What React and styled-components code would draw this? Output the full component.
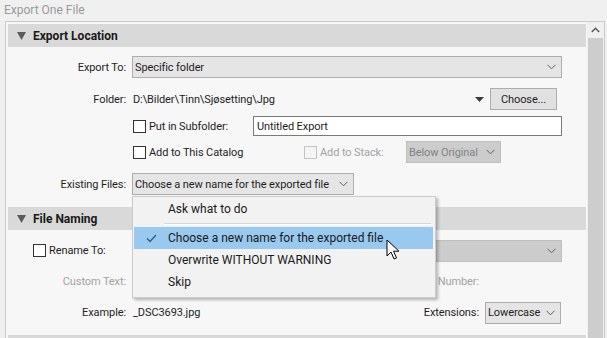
import React from 'react'
import styled, { createGlobalStyle } from 'styled-components'

const GlobalStyle = createGlobalStyle`
  html, body {
    margin: 0;
    padding: 0;
    background: #f0f0f0;
  }
  body {
    font-family: Roboto, 'Noto Sans', sans-serif;
    font-size: 11px;
    letter-spacing: -0.1px;
    color: #1e1e1e;
  }
`

const Page = styled.div`
  width: 607px;
  height: 338px;
  overflow: hidden;
  background: #f0f0f0;
  display: flex;
  flex-direction: column;
`
const Title = styled.div`
  height: 21px;
  line-height: 20px;
  padding-left: 4px;
  color: #9a9a9a;
  font-size: 12px;
  letter-spacing: 0;
  box-sizing: border-box;
`
const Panel = styled.div`
  flex: 1;
  margin-left: 5px;
  width: 600px;
  box-sizing: border-box;
  border: 1px solid #cacaca;
  border-bottom: none;
  background: #f7f7f7;
  display: flex;
  overflow: hidden;
`
const Content = styled.div`
  width: 578px;
  padding: 2px 0 0 2px;
`
const Scrollbar = styled.div`
  width: 17px;
  margin-left: 1px;
  background: #f0f0f0;
  display: flex;
  flex-direction: column;
  align-items: center;
`
const ScrollArrow = styled.div`
  height: 16px;
  display: flex;
  align-items: center;
  justify-content: center;
`
const Thumb = styled.div`
  flex: 1;
  width: 15px;
  background: #cdcdcd;
`
const SectionHeader = styled.div`
  height: 23px;
  margin-top: ${({ $gap }) => $gap || 0}px;
  background: #d9d9d9;
  display: flex;
  align-items: center;
  gap: 7px;
  padding-left: 9px;
  font-weight: 700;
  font-size: 12px;
  letter-spacing: 0;
  color: #1a1a1a;
`
const Body = styled.div`
  padding: ${({ $pad }) => $pad};
`
const Row = styled.div`
  height: ${({ $h }) => $h}px;
  display: flex;
  align-items: center;
`
const Label = styled.div`
  width: ${({ $w }) => $w || 118}px;
  flex-shrink: 0;
  text-align: right;
  margin-right: ${({ $gap }) => ($gap === undefined ? 6 : $gap)}px;
  color: ${({ $disabled }) => ($disabled ? '#a3a3a3' : '#1e1e1e')};
`
const Value = styled.span`
  margin-left: 1px;
`
const SelectBox = styled.div`
  width: ${({ $w }) => $w}px;
  height: 22px;
  box-sizing: border-box;
  border: 1px solid ${({ $disabled }) => ($disabled ? '#bfbfbf' : '#adadad')};
  background: ${({ $disabled }) => ($disabled ? '#cccccc' : '#e5e5e5')};
  color: ${({ $disabled }) => ($disabled ? '#838383' : '#1e1e1e')};
  display: flex;
  align-items: center;
  padding: 0 0 0 2px;
  white-space: nowrap;
  flex-shrink: 0;
`
const SelectText = styled.span`
  flex: 1;
  overflow: hidden;
`
const Chevron = styled.svg`
  width: 9px;
  height: 6px;
  margin: 0 5px 0 3px;
  flex-shrink: 0;
`
const Button = styled.div`
  width: 67px;
  height: 22px;
  box-sizing: border-box;
  border: 1px solid #adadad;
  background: #e1e1e1;
  display: flex;
  align-items: center;
  justify-content: center;
  margin-left: 6px;
`
const Spacer = styled.div`
  flex: 1;
`
const RightPad = styled.div`
  width: ${({ $w }) => $w}px;
  flex-shrink: 0;
`
const CheckItem = styled.label`
  display: flex;
  align-items: center;
  gap: 3px;
  margin-left: ${({ $left }) => $left || 0}px;
  width: ${({ $w }) => ($w ? `${$w}px` : 'auto')};
  flex-shrink: 0;
  color: ${({ $disabled }) => ($disabled ? '#a3a3a3' : '#1e1e1e')};
`
const Box = styled.span`
  width: 13px;
  height: 13px;
  box-sizing: border-box;
  border: 1px solid ${({ $disabled }) => ($disabled ? '#c4c4c4' : '#333333')};
  background: ${({ $disabled }) => ($disabled ? '#f5f5f5' : '#ffffff')};
  display: inline-block;
`
const TextInput = styled.div`
  width: 309px;
  height: 20px;
  box-sizing: border-box;
  border: 1px solid #7a7a7a;
  background: #ffffff;
  display: flex;
  align-items: center;
  padding-left: 3px;
`
const Anchor = styled.div`
  position: relative;
`
const Menu = styled.div`
  position: absolute;
  left: 0;
  top: 23px;
  width: 304px;
  box-sizing: border-box;
  border: 1px solid #cccccc;
  background: #f2f2f2;
  padding: 1px 2px 4px 1px;
  box-shadow: 2px 2px 3px rgba(0, 0, 0, 0.28);
  z-index: 5;
  font-size: 12px;
  letter-spacing: 0;
`
const MenuItem = styled.div`
  height: 22px;
  display: flex;
  align-items: center;
  background: ${({ $active }) => ($active ? '#99c9ef' : 'transparent')};
  color: #1a1a1a;
`
const CheckSlot = styled.div`
  width: 34px;
  display: flex;
  justify-content: center;
`
const Separator = styled.div`
  height: 1px;
  margin: 3px 2px 2px 30px;
  background: #d7d7d7;
  border-bottom: 1px solid #ffffff;
`
const Cursor = styled.svg`
  position: absolute;
  left: 254px;
  top: 66px;
  width: 14px;
  height: 22px;
  z-index: 6;
`
const DropTri = styled.svg`
  width: 9px;
  height: 5px;
`

const Tri = () => (
  <svg width="9" height="8" viewBox="0 0 9 8">
    <path d="M0 0 H9 L4.5 8 Z" fill="#5b5b5b" />
  </svg>
)

const Chev = () => (
  <Chevron viewBox="0 0 9 6">
    <path d="M0.5 0.8 L4.5 4.8 L8.5 0.8" fill="none" stroke="#5f5f5f" strokeWidth="1" />
  </Chevron>
)

const Select = ({ w, disabled, children }) => (
  <SelectBox $w={w} $disabled={disabled}>
    <SelectText>{children}</SelectText>
    <Chev />
  </SelectBox>
)

export default function App() {
  return (
    <Page>
      <GlobalStyle />
      <Title>Export One File</Title>
      <Panel>
        <Content>
          <SectionHeader>
            <Tri />
            Export Location
          </SectionHeader>
          <Body $pad="4px 0 6px 0">
            <Row $h={32}>
              <Label>Export To:</Label>
              <Select w={430}>Specific folder</Select>
            </Row>
            <Row $h={32}>
              <Label>Folder:</Label>
              <Value>D:\Bilder\Tinn\Sjøsetting\Jpg</Value>
              <Spacer />
              <DropTri viewBox="0 0 9 5">
                <path d="M0 0 H9 L4.5 5 Z" fill="#3c3c3c" />
              </DropTri>
              <Button>Choose...</Button>
              <RightPad $w={29} />
            </Row>
            <Row $h={22}>
              <Label>&nbsp;</Label>
              <CheckItem $left={1} $w={120}>
                <Box />
                Put in Subfolder:
              </CheckItem>
              <TextInput>Untitled Export</TextInput>
            </Row>
            <Row $h={30}>
              <Label>&nbsp;</Label>
              <CheckItem $left={1} $w={171}>
                <Box />
                Add to This Catalog
              </CheckItem>
              <CheckItem $disabled $w={102}>
                <Box $disabled />
                Add to Stack:
              </CheckItem>
              <Select w={95} disabled>
                Below Original
              </Select>
            </Row>
            <Row $h={34}>
              <Label>Existing Files:</Label>
              <Anchor>
                <Select w={222}>Choose a new name for the exported file</Select>
                <Menu>
                  <MenuItem>
                    <CheckSlot />
                    Ask what to do
                  </MenuItem>
                  <Separator />
                  <MenuItem $active>
                    <CheckSlot>
                      <svg width="11" height="9" viewBox="0 0 11 9">
                        <path d="M1 4.5 L4 7.5 L10 1" fill="none" stroke="#2f5c84" strokeWidth="1.3" />
                      </svg>
                    </CheckSlot>
                    Choose a new name for the exported file
                  </MenuItem>
                  <MenuItem>
                    <CheckSlot />
                    Overwrite WITHOUT WARNING
                  </MenuItem>
                  <MenuItem>
                    <CheckSlot />
                    Skip
                  </MenuItem>
                </Menu>
                <Cursor viewBox="0 0 14 22">
                  <path
                    d="M1 1 L1 17 L5 13 L8 20 L10.5 19 L7.6 12.2 L13 12.2 Z"
                    fill="#ffffff"
                    stroke="#000000"
                    strokeWidth="1"
                    strokeLinejoin="round"
                  />
                </Cursor>
              </Anchor>
            </Row>
          </Body>
          <SectionHeader>
            <Tri />
            File Naming
          </SectionHeader>
          <Body $pad="5px 0 6px 0">
            <Row $h={31}>
              <CheckItem $left={25} $w={99}>
                <Box />
                Rename To:
              </CheckItem>
              <Select w={430} disabled>
                &nbsp;
              </Select>
            </Row>
            <Row $h={31}>
              <Label $disabled>Custom Text:</Label>
              <Spacer />
              <Label $disabled $w={120} $gap={107}>
                Start Number:
              </Label>
            </Row>
            <Row $h={31}>
              <Label>Example:</Label>
              <Value>_DSC3693.jpg</Value>
              <Spacer />
              <Label $w={120}>Extensions:</Label>
              <Select w={76}>Lowercase</Select>
              <RightPad $w={25} />
            </Row>
          </Body>
          <SectionHeader $gap={1} />
        </Content>
        <Scrollbar>
          <ScrollArrow>
            <svg width="9" height="6" viewBox="0 0 9 6">
              <path d="M0.8 5 L4.5 1.3 L8.2 5" fill="none" stroke="#555" strokeWidth="1.4" />
            </svg>
          </ScrollArrow>
          <Thumb />
        </Scrollbar>
      </Panel>
    </Page>
  )
}
